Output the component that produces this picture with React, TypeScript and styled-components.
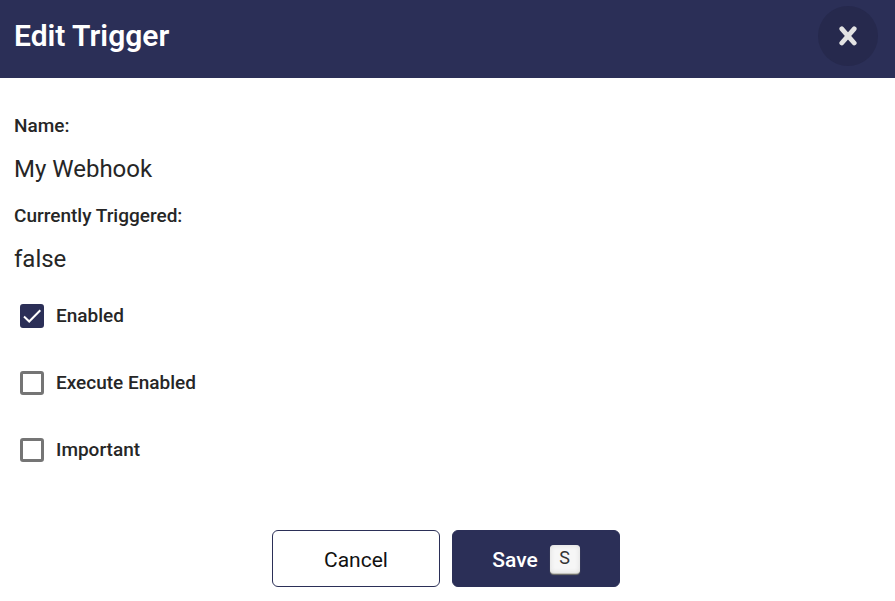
import React, { useState } from "react";
import styled, { createGlobalStyle } from "styled-components";

const NAVY = "#2b2f57";

const GlobalStyle = createGlobalStyle`
  *, *::before, *::after { box-sizing: border-box; }
  body {
    margin: 0;
    background: #fff;
    color: #262626;
    font-family: Roboto, "Liberation Sans", sans-serif;
  }
`;

const Dialog = styled.form`
  display: flex;
  flex-direction: column;
`;

const Header = styled.header`
  display: flex;
  align-items: center;
  justify-content: space-between;
  padding: 6px 17px 12px 14px;
  background: ${NAVY};
  color: #fff;
`;

const Title = styled.h1`
  margin: 0;
  font-size: 30px;
  line-height: 36px;
  font-weight: 600;
`;

const CloseButton = styled.button`
  display: grid;
  place-items: center;
  width: 60px;
  height: 60px;
  padding: 0;
  border: 0;
  border-radius: 50%;
  background: #26294d;
  color: #e3e3e3;
  cursor: pointer;
`;

const Details = styled.dl`
  display: flex;
  flex-direction: column;
  margin: 0;
  padding: 32px 14px 0;
`;

const Term = styled.dt`
  font-size: 19px;
  line-height: 32px;
  font-weight: 500;
`;

const Value = styled.dd`
  margin: 0;
  padding: 9px 0 13px;
  font-size: 24px;
  line-height: 36px;
`;

const Options = styled.div`
  display: flex;
  flex-direction: column;
  align-items: flex-start;
  gap: 35px;
  padding: 10px 20px 0;
`;

const Option = styled.label`
  display: flex;
  align-items: center;
  gap: 12px;
  font-size: 19px;
  line-height: 32px;
  font-weight: 500;
  cursor: pointer;
`;

const CheckControl = styled.span`
  display: grid;
  place-items: center;

  & > * {
    grid-area: 1 / 1;
  }
`;

const CheckInput = styled.input`
  appearance: none;
  width: 24px;
  height: 24px;
  margin: 0;
  border: 3px solid #757575;
  border-radius: 3px;
  background: #fff;
  cursor: pointer;

  &:checked {
    border-color: ${NAVY};
    background: ${NAVY};
  }
`;

const CheckMark = styled.svg`
  pointer-events: none;
`;

const Actions = styled.footer`
  display: flex;
  justify-content: center;
  gap: 12px;
  padding: 64px 17px 14px 14px;
`;

const ActionButton = styled.button<{ $primary?: boolean }>`
  display: flex;
  align-items: center;
  justify-content: center;
  gap: 12px;
  min-width: 168px;
  height: 57px;
  padding: 2px 16px 0;
  border: 1px solid ${NAVY};
  border-radius: 6px;
  background: ${(p) => (p.$primary ? NAVY : "#fff")};
  color: ${(p) => (p.$primary ? "#fff" : "#111")};
  font-family: inherit;
  font-size: 21px;
  line-height: 28px;
  font-weight: ${(p) => (p.$primary ? 500 : 400)};
  cursor: pointer;
`;

const KeyCap = styled.kbd`
  display: grid;
  place-items: center;
  width: 30px;
  height: 28px;
  margin-bottom: 2px;
  padding-bottom: 2px;
  border-radius: 4px;
  background: #f6f6f6;
  box-shadow: inset 0 0 5px #d9d9d9, 0 1px 0 #c4c4be, 0 2px 1px #77776f;
  color: #333;
  font-family: inherit;
  font-size: 18px;
  line-height: 24px;
  font-weight: 400;
`;

function Checkbox({ label, initial = false }: { label: string; initial?: boolean }) {
  const [checked, setChecked] = useState(initial);
  return (
    <Option>
      <CheckControl>
        <CheckInput type="checkbox" checked={checked} onChange={(e) => setChecked(e.target.checked)} />
        {checked && (
          <CheckMark width="24" height="24" viewBox="0 0 24 24" fill="none" stroke="#fff" strokeWidth="2" aria-hidden="true">
            <path d="M4 12.5 9.2 17.5 20.3 6.3" />
          </CheckMark>
        )}
      </CheckControl>
      {label}
    </Option>
  );
}

export default function App() {
  return (
    <>
      <GlobalStyle />
      <Dialog onSubmit={(e) => e.preventDefault()}>
        <Header>
          <Title>Edit Trigger</Title>
          <CloseButton type="button" aria-label="Close">
            <svg width="20" height="20" viewBox="0 0 20 20" fill="none" stroke="currentColor" strokeWidth="4.8" strokeLinecap="round" aria-hidden="true">
              <path d="M3.8 2.9 16.2 17M16.2 2.9 3.8 17" />
            </svg>
          </CloseButton>
        </Header>
        <Details>
          <Term>Name:</Term>
          <Value>My Webhook</Value>
          <Term>Currently Triggered:</Term>
          <Value>false</Value>
        </Details>
        <Options>
          <Checkbox label="Enabled" initial />
          <Checkbox label="Execute Enabled" />
          <Checkbox label="Important" />
        </Options>
        <Actions>
          <ActionButton type="button">Cancel</ActionButton>
          <ActionButton type="submit" $primary>
            Save <KeyCap>S</KeyCap>
          </ActionButton>
        </Actions>
      </Dialog>
    </>
  );
}
